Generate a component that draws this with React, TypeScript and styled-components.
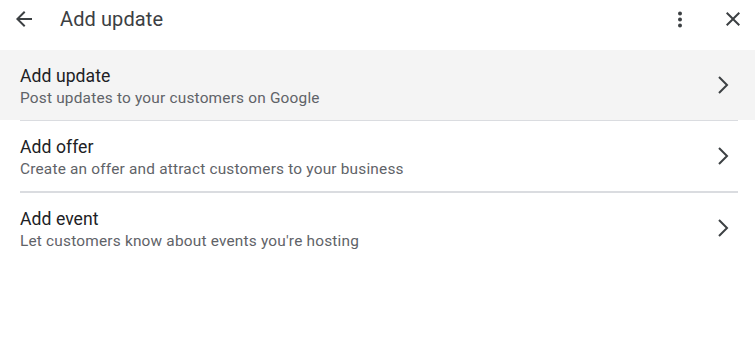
import React from 'react';
import styled, { createGlobalStyle } from 'styled-components';

const GlobalStyle = createGlobalStyle`
  html, body {
    margin: 0;
    padding: 0;
    background: #ffffff;
    font-family: Roboto, "Liberation Sans", Arial, sans-serif;
  }
`;

const Page = styled.div`
  width: 755px;
  height: 363px;
  background: #ffffff;
  overflow: hidden;
`;

const Header = styled.div`
  display: flex;
  align-items: center;
  height: 38px;
  padding: 0 10px 0 12px;
  margin-bottom: 12px;
`;

const IconButton = styled.button`
  display: flex;
  align-items: center;
  justify-content: center;
  width: 24px;
  height: 24px;
  padding: 0;
  border: none;
  background: none;
  color: #3c4043;
  cursor: pointer;
`;

const Title = styled.h1`
  flex: 1;
  margin: 0 0 0 24px;
  font-size: 20px;
  font-weight: 400;
  color: #3c4043;
  letter-spacing: 0.1px;
`;

const Actions = styled.div`
  display: flex;
  align-items: center;
  gap: 29px;
`;

const List = styled.div`
  display: flex;
  flex-direction: column;
`;

const Item = styled.div<{ $active?: boolean }>`
  display: flex;
  align-items: center;
  height: 70px;
  padding: 0 26px 0 20px;
  background: ${p => (p.$active ? '#f4f4f4' : '#ffffff')};
  cursor: pointer;
`;

const Texts = styled.div`
  flex: 1;
  display: flex;
  flex-direction: column;
  padding-top: 1px;
`;

const ItemTitle = styled.div`
  font-size: 17.6px;
  line-height: 24px;
  color: #202124;
  letter-spacing: 0.05px;
`;

const ItemSub = styled.div`
  font-size: 15.4px;
  line-height: 20px;
  color: #5f6368;
  letter-spacing: 0.2px;
`;

const Divider = styled.div<{ $size: number }>`
  height: ${p => p.$size}px;
  margin: 0 17px 0 20px;
  background: #dadce0;
`;

const Chevron = () => (
  <svg width="12" height="20" viewBox="0 0 12 20" fill="none">
    <path d="M2 2 L10 10 L2 18" stroke="#3c4043" strokeWidth="2" />
  </svg>
);

const items = [
  { title: 'Add update', sub: 'Post updates to your customers on Google' },
  { title: 'Add offer', sub: 'Create an offer and attract customers to your business' },
  { title: 'Add event', sub: "Let customers know about events you're hosting" },
];

export default function App() {
  return (
    <Page>
      <GlobalStyle />
      <Header>
        <IconButton aria-label="Back">
          <svg width="24" height="24" viewBox="0 0 24 24" fill="currentColor">
            <path d="M20 11H7.83l5.59-5.59L12 4l-8 8 8 8 1.41-1.41L7.83 13H20v-2z" />
          </svg>
        </IconButton>
        <Title>Add update</Title>
        <Actions>
          <IconButton aria-label="More">
            <svg width="24" height="24" viewBox="0 0 24 24" fill="currentColor">
              <circle cx="12" cy="6.5" r="2" />
              <circle cx="12" cy="12.5" r="2" />
              <circle cx="12" cy="18.5" r="2" />
            </svg>
          </IconButton>
          <IconButton aria-label="Close">
            <svg width="24" height="24" viewBox="0 0 24 24" fill="currentColor">
              <path d="M19 6.41L17.59 5 12 10.59 6.41 5 5 6.41 10.59 12 5 17.59 6.41 19 12 13.41 17.59 19 19 17.59 13.41 12z" />
            </svg>
          </IconButton>
        </Actions>
      </Header>
      <List>
        {items.map((it, i) => (
          <React.Fragment key={it.title}>
            <Item $active={i === 0}>
              <Texts>
                <ItemTitle>{it.title}</ItemTitle>
                <ItemSub>{it.sub}</ItemSub>
              </Texts>
              <Chevron />
            </Item>
            {i < items.length - 1 && <Divider $size={i === 0 ? 1 : 2} />}
          </React.Fragment>
        ))}
      </List>
    </Page>
  );
}
